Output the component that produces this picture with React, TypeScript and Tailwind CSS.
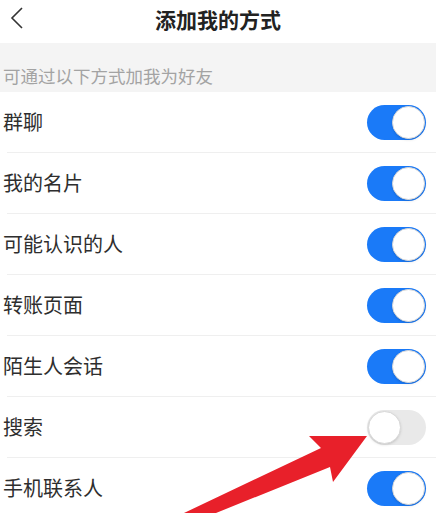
import { useState } from "react";

const items = [
  { label: "群聊", on: true },
  { label: "我的名片", on: true },
  { label: "可能认识的人", on: true },
  { label: "转账页面", on: true },
  { label: "陌生人会话", on: true },
  { label: "搜索", on: false },
  { label: "手机联系人", on: true },
];

const Toggle = ({ on, onClick }: { on: boolean; onClick: () => void }) => (
  <button
    onClick={onClick}
    className={`relative h-[35px] w-[59px] rounded-full ${on ? "bg-[#1a7af8]" : "bg-[#e9e9e9]"}`}
  >
    <span
      className={`absolute top-[1px] h-[33px] w-[33px] rounded-full border border-[#d8d8d8] bg-white shadow-sm ${on ? "right-[1px]" : "left-[1px]"}`}
    />
  </button>
);

const App = () => {
  const [state, setState] = useState(items.map((i) => i.on));

  return (
    <div className="relative h-[513px] w-[436px] overflow-hidden bg-white font-['Noto_Sans_CJK_SC',sans-serif] text-[#222]">
      <div className="relative flex h-[43px] items-center justify-center">
        <svg className="absolute left-[9px] top-[6px]" width="16" height="24" viewBox="0 0 16 24">
          <path d="M13 2 L3 12 L13 22" fill="none" stroke="#333" strokeWidth="1.6" />
        </svg>
        <h1 className="-mt-[3px] text-[21px] font-semibold text-[#222]">添加我的方式</h1>
      </div>
      <div className="flex h-[49px] items-end bg-[#f4f4f4] pb-[3px] pl-[3px] text-[17.5px] text-[#a3a3a3]">
        可通过以下方式加我为好友
      </div>
      {items.map((item, i) => (
        <div
          key={item.label}
          className="ml-[7px] flex h-[61px] items-center justify-between border-b border-[#efefef] pr-[10px]"
        >
          <span className="-ml-[4px] text-[20px] text-[#2e2e2e]">{item.label}</span>
          <Toggle
            on={state[i]}
            onClick={() => setState((s) => s.map((v, j) => (j === i ? !v : v)))}
          />
        </div>
      ))}
      {/* red pointer over the search switch */}
      <svg className="pointer-events-none absolute left-0 top-0" width="436" height="513">
        <polygon
          points="367,436 309,436 321,448 184,513 216,513 330,467 333,482"
          fill="#e8202a"
        />
      </svg>
    </div>
  );
};

export default App;
